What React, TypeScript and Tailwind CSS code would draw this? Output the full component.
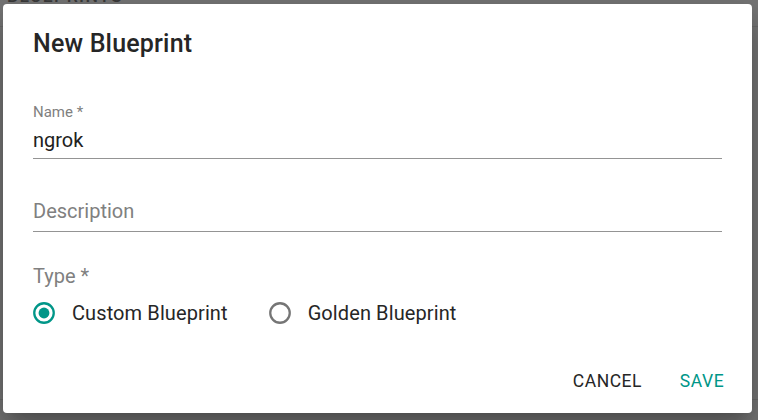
import { useState } from "react";

const TEAL = "#009688";

function RadioIcon({ checked }: { checked: boolean }) {
  return (
    <svg width="26" height="26" viewBox="0 0 24 24" className="shrink-0">
      <circle cx="12" cy="12" r="9" fill="none" stroke={checked ? TEAL : "#757575"} strokeWidth="2.1" />
      {checked && <circle cx="12" cy="12" r="5" fill={TEAL} />}
    </svg>
  );
}

export default function App() {
  const [type, setType] = useState<"custom" | "golden">("custom");

  return (
    <div className="relative h-[420px] w-[758px] overflow-hidden bg-[#767676] font-['Roboto','Liberation_Sans',sans-serif]">
      {/* page behind the backdrop */}
      <span className="absolute left-[7px] top-[-14px] text-[17.5px] font-medium leading-[20px] tracking-[0.08em] text-[#3a3a3a]">
        BLUEPRINTS
      </span>
      <div className="absolute left-0 right-0 top-[26px] h-px bg-[#6b6b6b]" />
      <div className="absolute left-0 right-0 top-[399px] h-px bg-[#6b6b6b]" />

      <div className="absolute left-[3px] top-[4px] flex h-[409px] w-[749px] flex-col rounded-[4px] bg-white shadow-[0_11px_15px_-7px_rgba(0,0,0,0.2),0_24px_38px_3px_rgba(0,0,0,0.14),0_9px_46px_8px_rgba(0,0,0,0.12)]">
        <h2 className="px-[30px] pb-[20px] pt-[20px] text-[25px] font-medium leading-[40px] tracking-[0.0075em] text-[#262626]">
          New Blueprint
        </h2>

        <div className="flex flex-col px-[30px]">
          <label className="mt-[19px] text-[15px] leading-[18px] text-[#808080]">Name *</label>
          <div className="mt-[7px] border-b border-[#949494] pb-[6px] text-[20px] leading-[24px] text-[#212121]">
            ngrok
          </div>

          <div className="mt-[40px] border-b border-[#949494] pb-[8px] text-[20px] leading-[24px] text-[#808080]">
            Description
          </div>

          <div className="mt-[32px] text-[20px] leading-[24px] text-[#808080]">Type *</div>

          <div className="flex h-[50px] items-center text-[20px] leading-[24px] tracking-[0.005em] text-[#262626]">
            <button className="-ml-[2px] flex items-center" onClick={() => setType("custom")}>
              <RadioIcon checked={type === "custom"} />
              <span className="ml-[15px]">Custom Blueprint</span>
            </button>
            <button className="ml-[39px] flex items-center" onClick={() => setType("golden")}>
              <RadioIcon checked={type === "golden"} />
              <span className="ml-[15px]">Golden Blueprint</span>
            </button>
          </div>
        </div>

        <div className="mt-auto flex justify-end gap-[10px] pb-[9px] pr-[10px]">
          <button className="min-w-[80px] rounded-[4px] px-[10px] py-[7.5px] text-[17.5px] font-normal uppercase leading-[1.75] tracking-[0.03em] text-[#262626]">
            Cancel
          </button>
          <button className="min-w-[80px] rounded-[4px] px-[10px] py-[7.5px] text-[17.5px] font-normal uppercase leading-[1.75] tracking-[0.03em] text-[#009688]">
            Save
          </button>
        </div>
      </div>
    </div>
  );
}
